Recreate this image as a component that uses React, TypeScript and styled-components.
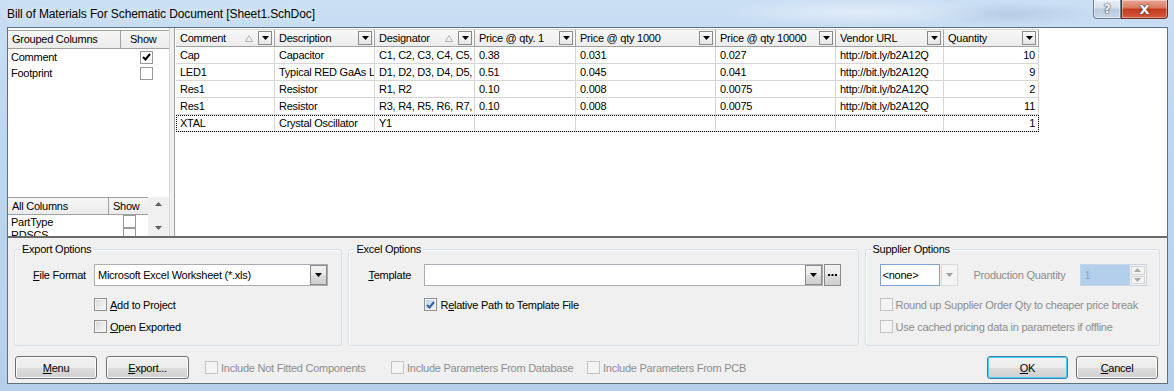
import styled, { createGlobalStyle } from 'styled-components'

const GlobalStyle = createGlobalStyle`
  html, body { margin: 0; padding: 0; }
  body {
    font-family: "Liberation Sans", Arial, sans-serif;
    font-size: 11px;
    letter-spacing: -0.25px;
    color: #000;
  }
`

interface Column {
  title: string
  width: number
  sort?: boolean
  align?: 'left' | 'right'
}

const columns: Column[] = [
  { title: 'Comment', width: 99, sort: true },
  { title: 'Description', width: 100 },
  { title: 'Designator', width: 100, sort: true },
  { title: 'Price @ qty. 1', width: 101 },
  { title: 'Price @ qty 1000', width: 140 },
  { title: 'Price @ qty 10000', width: 120 },
  { title: 'Vendor URL', width: 108 },
  { title: 'Quantity', width: 95, align: 'right' },
]

const rows: string[][] = [
  ['Cap', 'Capacitor', 'C1, C2, C3, C4, C5, C6', '0.38', '0.031', '0.027', 'http://bit.ly/b2A12Q', '10'],
  ['LED1', 'Typical RED GaAs LED', 'D1, D2, D3, D4, D5, D6', '0.51', '0.045', '0.041', 'http://bit.ly/b2A12Q', '9'],
  ['Res1', 'Resistor', 'R1, R2', '0.10', '0.008', '0.0075', 'http://bit.ly/b2A12Q', '2'],
  ['Res1', 'Resistor', 'R3, R4, R5, R6, R7, R8', '0.10', '0.008', '0.0075', 'http://bit.ly/b2A12Q', '11'],
  ['XTAL', 'Crystal Oscillator', 'Y1', '', '', '', '', '1'],
]

const gridTemplate = columns.map((c) => `${c.width}px`).join(' ')

const Window = styled.div`
  width: 1174px;
  height: 391px;
  box-sizing: border-box;
  display: flex;
  flex-direction: column;
  padding: 0 6px 7px 7px;
  overflow: hidden;
  background:
    radial-gradient(ellipse 140px 14px at 860px 12px, rgba(255, 255, 255, 0.45), transparent),
    radial-gradient(ellipse 90px 12px at 1010px 14px, rgba(150, 175, 205, 0.35), transparent),
    linear-gradient(180deg, #cadff4 0%, #bfd7f0 30%, #b6d0ec 100%);
`

const TitleBar = styled.div`
  height: 27px;
  display: flex;
  align-items: flex-start;
  justify-content: space-between;
`

const Title = styled.div`
  font-size: 12px;
  letter-spacing: -0.1px;
  padding-top: 7px;
  color: #000;
  text-shadow: 0 0 6px rgba(255, 255, 255, 0.9);
`

const CaptionButtons = styled.div`
  display: flex;
`

const CaptionButton = styled.div<{ $close?: boolean }>`
  width: ${(p) => (p.$close ? 47 : 28)}px;
  height: 19px;
  box-sizing: border-box;
  display: flex;
  align-items: center;
  justify-content: center;
  border: 1px solid ${(p) => (p.$close ? '#6b2a1e' : '#6f7e91')};
  border-top: none;
  border-radius: ${(p) => (p.$close ? '0 0 4px 0' : '0 0 0 4px')};
  font-family: "DejaVu Sans", sans-serif;
  font-weight: bold;
  font-size: ${(p) => (p.$close ? 13 : 12)}px;
  color: #fff;
  text-shadow: 0 0 2px #333, 0 0 1px #333;
  background: ${(p) =>
    p.$close
      ? 'linear-gradient(180deg, #e8a695 0%, #d9775f 45%, #c4391d 50%, #d25a3e 100%)'
      : 'linear-gradient(180deg, #e9f0f8 0%, #d4e0ee 45%, #b8c9dd 50%, #c9d8e9 100%)'};
  box-shadow: inset 0 0 0 1px rgba(255, 255, 255, 0.4);
`

const Client = styled.div`
  flex: 1;
  display: flex;
  flex-direction: column;
  border: 1px solid #5f6f82;
  background: #f0f0f0;
`

const TopPane = styled.div`
  height: 208px;
  display: flex;
  background: #fff;
  border-bottom: 2px solid #6a6a6a;
`

const LeftPane = styled.div`
  width: 161px;
  display: flex;
  flex-direction: column;
  padding-top: 2px;
  box-sizing: border-box;
`

const Splitter = styled.div`
  width: 4px;
  background: #f0f0f0;
  border-left: 1px solid #d8d8d8;
  border-right: 1px solid #a0a0a0;
`

const ListBlock = styled.div<{ $fill?: boolean }>`
  display: flex;
  flex-direction: column;
  flex: ${(p) => (p.$fill ? 1 : 'none')};
  overflow: hidden;
`

const ListHeader = styled.div<{ $cols: string }>`
  display: grid;
  grid-template-columns: ${(p) => p.$cols};
  height: 17px;
  border-top: 1px solid #a0a0a0;
  border-bottom: 1px solid #a0a0a0;
  background: linear-gradient(180deg, #f7f7f7, #ebebeb);
`

const HeaderText = styled.div<{ $divider?: boolean; $indent?: number }>`
  padding-left: ${(p) => p.$indent ?? 4}px;
  line-height: 16px;
  white-space: nowrap;
  overflow: hidden;
  border-right: ${(p) => (p.$divider ? '1px solid #a0a0a0' : 'none')};
`

const ListRow = styled.div<{ $cols: string }>`
  display: grid;
  grid-template-columns: ${(p) => p.$cols};
  height: 16px;
  align-items: center;
`

const ListCell = styled.div<{ $center?: boolean }>`
  padding-left: 3px;
  display: flex;
  justify-content: ${(p) => (p.$center ? 'center' : 'flex-start')};
  white-space: nowrap;
`

const GridCheck = styled.span`
  width: 13px;
  height: 13px;
  box-sizing: border-box;
  border: 1px solid #9a9a9a;
  background: #fff;
  display: flex;
  align-items: center;
  justify-content: center;
`

const AllColumnsBlock = styled.div`
  height: 39px;
  display: flex;
  overflow: hidden;
`

const ScrollBar = styled.div`
  width: 21px;
  background: #f0f0f0;
  display: flex;
  flex-direction: column;
  justify-content: space-between;
  align-items: center;
  padding: 5px 0 6px;
  box-sizing: border-box;
`

const BomGrid = styled.div`
  flex: 1;
  padding-left: 1px;
  overflow: hidden;
`

const GridRow = styled.div<{ $focused?: boolean; $header?: boolean }>`
  display: grid;
  grid-template-columns: ${gridTemplate};
  width: max-content;
  height: ${(p) => (p.$header ? 18 : 17)}px;
  box-sizing: border-box;
  outline: ${(p) => (p.$focused ? '1px dotted #000' : 'none')};
  outline-offset: -1px;
  ${(p) =>
    p.$header &&
    `
    margin-top: 1px;
    border-top: 1px solid #d8d8d8;
    border-bottom: 1px solid #a0a0a0;
    background: linear-gradient(180deg, #f8f8f8, #ececec);
  `}
`

const HeadCell = styled.div`
  display: flex;
  align-items: center;
  padding-left: 4px;
  padding-right: 2px;
  border-right: 1px solid #a0a0a0;
  box-shadow: inset -1px 0 0 #fff;
  white-space: nowrap;
  overflow: hidden;
`

const HeadTitle = styled.span`
  flex: 1;
`

const SortMark = styled.svg`
  margin-right: 5px;
`

const DropBox = styled.span`
  width: 14px;
  height: 14px;
  box-sizing: border-box;
  border: 1px solid #8a8a8a;
  background: linear-gradient(180deg, #fafafa, #e6e6e6);
  display: flex;
  align-items: center;
  justify-content: center;
  flex: none;
`

const BodyCell = styled.div<{ $right?: boolean }>`
  padding: 0 ${(p) => (p.$right ? 3 : 4)}px 0 4px;
  line-height: 16px;
  border-right: 1px solid #d6d6d6;
  border-bottom: 1px solid #d6d6d6;
  text-align: ${(p) => (p.$right ? 'right' : 'left')};
  white-space: nowrap;
  overflow: hidden;
  text-overflow: clip;
`

const OptionsRow = styled.div`
  display: flex;
  gap: 6px;
  padding: 5px 7px 0 6px;
`

const GroupBox = styled.fieldset<{ $width: number }>`
  width: ${(p) => p.$width}px;
  height: 103px;
  box-sizing: border-box;
  margin: 0;
  padding: 0;
  min-width: 0;
  border: 1px solid #d5dfe5;
  border-radius: 3px;
  box-shadow: inset 1px 1px 0 #fff;

  legend {
    margin-left: 6px;
    padding: 0 2px 0 1px;
    line-height: 13px;
  }
`

const GroupBody = styled.div<{ $pl: number }>`
  display: flex;
  flex-direction: column;
  padding: 8px 0 0 ${(p) => p.$pl}px;
`

const FieldRow = styled.div`
  display: flex;
  align-items: center;
  height: 22px;
`

const FieldLabel = styled.span<{ $width: number; $disabled?: boolean }>`
  width: ${(p) => p.$width}px;
  flex: none;
  color: ${(p) => (p.$disabled ? '#8d8d8d' : '#000')};
  white-space: nowrap;
`

const Combo = styled.div<{ $width: number }>`
  width: ${(p) => p.$width}px;
  height: 22px;
  box-sizing: border-box;
  border: 1px solid #abadb3;
  background: #fff;
  display: flex;
  align-items: stretch;
`

const ComboText = styled.span`
  flex: 1;
  padding-left: 3px;
  line-height: 20px;
  white-space: nowrap;
  overflow: hidden;
`

const ComboButton = styled.span<{ $disabled?: boolean }>`
  width: 17px;
  box-sizing: border-box;
  border: 1px solid ${(p) => (p.$disabled ? '#d9d9d9' : '#8a8a8a')};
  background: ${(p) =>
    p.$disabled ? '#f4f4f4' : 'linear-gradient(180deg, #f2f2f2 0%, #ebebeb 50%, #dddddd 51%, #cfcfcf 100%)'};
  display: flex;
  align-items: center;
  justify-content: center;
`

const EllipsisButton = styled(ComboButton)`
  height: 22px;
  margin-left: 1px;
`

const SupplierCombo = styled.div`
  width: 78px;
  height: 22px;
  display: flex;
  margin-right: 16px;
`

const SupplierEdit = styled.span`
  flex: 1;
  box-sizing: border-box;
  border: 1px solid #7da2ce;
  background: #fff;
  padding-left: 2px;
  line-height: 20px;
  margin-right: 1px;
`

const SpinField = styled.div`
  width: 67px;
  height: 22px;
  box-sizing: border-box;
  border: 1px solid #c6d4e3;
  background: #b3cfeb;
  display: flex;
`

const SpinText = styled.span`
  flex: 1;
  padding-left: 4px;
  line-height: 20px;
  color: #8da4bd;
`

const SpinButtons = styled.span`
  width: 16px;
  display: flex;
  flex-direction: column;
  gap: 1px;
  padding: 1px;
  box-sizing: border-box;
  background: #f4f4f4;
`

const SpinHalf = styled.span`
  flex: 1;
  border: 1px solid #d5d5d5;
  display: flex;
  align-items: center;
  justify-content: center;
`

const CheckRow = styled.label<{ $disabled?: boolean; $width?: number; $indent?: number }>`
  display: flex;
  align-items: center;
  gap: 3px;
  height: 13px;
  margin-left: ${(p) => p.$indent ?? 0}px;
  width: ${(p) => (p.$width ? `${p.$width}px` : 'auto')};
  flex: none;
  color: ${(p) => (p.$disabled ? '#8d8d8d' : '#000')};
  white-space: nowrap;
`

const CheckBox = styled.span<{ $disabled?: boolean; $checked?: boolean }>`
  width: 13px;
  height: 13px;
  box-sizing: border-box;
  flex: none;
  border: 1px solid ${(p) => (p.$disabled ? '#c4c4c4' : '#8e8f8f')};
  background: ${(p) =>
    p.$disabled
      ? '#f4f4f4'
      : p.$checked
        ? 'linear-gradient(135deg, #b9cfe6, #eef4fb)'
        : 'linear-gradient(135deg, #d6d6d6, #fbfbfb)'};
  box-shadow: inset 0 0 0 1px #f4f4f4;
  display: flex;
  align-items: center;
  justify-content: center;
`

const ChecksColumn = styled.div<{ $gap: number; $top: number }>`
  display: flex;
  flex-direction: column;
  gap: ${(p) => p.$gap}px;
  margin-top: ${(p) => p.$top}px;
`

const BottomBar = styled.div`
  display: flex;
  align-items: center;
  padding: 10px 9px 0 7px;
`

const Button = styled.button<{ $width: number; $default?: boolean; $gap?: number }>`
  width: ${(p) => p.$width}px;
  height: 23px;
  margin-right: ${(p) => p.$gap ?? 9}px;
  padding: 0;
  font: inherit;
  letter-spacing: inherit;
  color: #000;
  border: 1px solid ${(p) => (p.$default ? '#3c7fb1' : '#707070')};
  border-radius: 3px;
  background: linear-gradient(180deg, #f2f2f2 0%, #ebebeb 50%, #dddddd 51%, #cfcfcf 100%);
  box-shadow: inset 0 0 0 1px ${(p) => (p.$default ? '#48d0f7' : '#fcfcfc')};
`

const Spacer = styled.div`
  flex: 1;
`

const DownArrow = ({ color = '#000' }: { color?: string }) => (
  <svg width="7" height="4" viewBox="0 0 7 4">
    <polygon points="0,0 7,0 3.5,4" fill={color} />
  </svg>
)

const UpArrow = ({ color = '#000' }: { color?: string }) => (
  <svg width="7" height="4" viewBox="0 0 7 4">
    <polygon points="0,4 7,4 3.5,0" fill={color} />
  </svg>
)

const Tick = ({ color = '#000' }: { color?: string }) => (
  <svg width="9" height="8" viewBox="0 0 9 8">
    <path d="M1 4 L3.5 6.5 L8 1" stroke={color} strokeWidth="2" fill="none" />
  </svg>
)

const SortArrow = () => (
  <SortMark width="8" height="7" viewBox="0 0 8 7">
    <polygon points="0.5,6.5 7.5,6.5 4,0.5" fill="none" stroke="#b4b4b4" />
  </SortMark>
)

const Ellipsis = () => (
  <svg width="9" height="2" viewBox="0 0 9 2">
    <rect x="0" y="0" width="2" height="2" fill="#000" />
    <rect x="3.5" y="0" width="2" height="2" fill="#000" />
    <rect x="7" y="0" width="2" height="2" fill="#000" />
  </svg>
)

function Check({
  label,
  checked,
  disabled,
  width,
  indent,
}: {
  label: React.ReactNode
  checked?: boolean
  disabled?: boolean
  width?: number
  indent?: number
}) {
  return (
    <CheckRow $disabled={disabled} $width={width} $indent={indent}>
      <CheckBox $disabled={disabled} $checked={checked}>
        {checked && <Tick color="#3a5f9c" />}
      </CheckBox>
      <span>{label}</span>
    </CheckRow>
  )
}

export default function App() {
  return (
    <Window>
      <GlobalStyle />
      <TitleBar>
        <Title>Bill of Materials For Schematic Document [Sheet1.SchDoc]</Title>
        <CaptionButtons>
          <CaptionButton>?</CaptionButton>
          <CaptionButton $close>X</CaptionButton>
        </CaptionButtons>
      </TitleBar>
      <Client>
        <TopPane>
          <LeftPane>
            <ListBlock $fill>
              <ListHeader $cols="113px 48px">
                <HeaderText $divider>Grouped Columns</HeaderText>
                <HeaderText $indent={9}>Show</HeaderText>
              </ListHeader>
              <ListRow $cols="113px 48px">
                <ListCell>Comment</ListCell>
                <ListCell $center>
                  <GridCheck>
                    <Tick />
                  </GridCheck>
                </ListCell>
              </ListRow>
              <ListRow $cols="113px 48px">
                <ListCell>Footprint</ListCell>
                <ListCell $center>
                  <GridCheck />
                </ListCell>
              </ListRow>
            </ListBlock>
            <AllColumnsBlock>
              <ListBlock $fill>
                <ListHeader $cols="101px 38px">
                  <HeaderText $divider>All Columns</HeaderText>
                  <HeaderText>Show</HeaderText>
                </ListHeader>
                <ListRow $cols="101px 38px">
                  <ListCell>PartType</ListCell>
                  <ListCell $center>
                    <GridCheck />
                  </ListCell>
                </ListRow>
                <ListRow $cols="101px 38px">
                  <ListCell>RDSCS</ListCell>
                  <ListCell $center>
                    <GridCheck />
                  </ListCell>
                </ListRow>
              </ListBlock>
              <ScrollBar>
                <UpArrow color="#606060" />
                <DownArrow color="#606060" />
              </ScrollBar>
            </AllColumnsBlock>
          </LeftPane>
          <Splitter />
          <BomGrid>
            <GridRow $header>
              {columns.map((c) => (
                <HeadCell key={c.title}>
                  <HeadTitle>{c.title}</HeadTitle>
                  {c.sort && <SortArrow />}
                  <DropBox>
                    <DownArrow />
                  </DropBox>
                </HeadCell>
              ))}
            </GridRow>
            {rows.map((r, i) => (
              <GridRow key={i} $focused={i === rows.length - 1}>
                {r.map((v, j) => (
                  <BodyCell key={j} $right={columns[j].align === 'right'}>
                    {v}
                  </BodyCell>
                ))}
              </GridRow>
            ))}
          </BomGrid>
        </TopPane>

        <OptionsRow>
          <GroupBox $width={329}>
            <legend>Export Options</legend>
            <GroupBody $pl={18}>
              <FieldRow>
                <FieldLabel $width={61}>
                  <u>F</u>ile Format
                </FieldLabel>
                <Combo $width={234}>
                  <ComboText>Microsoft Excel Worksheet (*.xls)</ComboText>
                  <ComboButton>
                    <DownArrow />
                  </ComboButton>
                </Combo>
              </FieldRow>
              <ChecksColumn $gap={9} $top={12}>
                <Check
                  indent={61}
                  label={
                    <>
                      <u>A</u>dd to Project
                    </>
                  }
                />
                <Check
                  indent={61}
                  label={
                    <>
                      <u>O</u>pen Exported
                    </>
                  }
                />
              </ChecksColumn>
            </GroupBody>
          </GroupBox>

          <GroupBox $width={511}>
            <legend>Excel Options</legend>
            <GroupBody $pl={19}>
              <FieldRow>
                <FieldLabel $width={56}>
                  <u>T</u>emplate
                </FieldLabel>
                <Combo $width={399}>
                  <ComboText />
                  <ComboButton>
                    <DownArrow />
                  </ComboButton>
                </Combo>
                <EllipsisButton>
                  <Ellipsis />
                </EllipsisButton>
              </FieldRow>
              <ChecksColumn $gap={9} $top={12}>
                <Check
                  indent={56}
                  checked
                  label={
                    <>
                      R<u>e</u>lative Path to Template File
                    </>
                  }
                />
              </ChecksColumn>
            </GroupBody>
          </GroupBox>

          <GroupBox $width={296}>
            <legend>Supplier Options</legend>
            <GroupBody $pl={14}>
              <FieldRow>
                <SupplierCombo>
                  <SupplierEdit>&lt;none&gt;</SupplierEdit>
                  <ComboButton $disabled>
                    <DownArrow color="#a0a0a0" />
                  </ComboButton>
                </SupplierCombo>
                <FieldLabel $width={106} $disabled>
                  Production Quantity
                </FieldLabel>
                <SpinField>
                  <SpinText>1</SpinText>
                  <SpinButtons>
                    <SpinHalf>
                      <UpArrow color="#a8a8a8" />
                    </SpinHalf>
                    <SpinHalf>
                      <DownArrow color="#a8a8a8" />
                    </SpinHalf>
                  </SpinButtons>
                </SpinField>
              </FieldRow>
              <ChecksColumn $gap={9} $top={12}>
                <Check disabled label="Round up Supplier Order Qty to cheaper price break" />
                <Check disabled label="Use cached pricing data in parameters if offline" />
              </ChecksColumn>
            </GroupBody>
          </GroupBox>
        </OptionsRow>

        <BottomBar>
          <Button $width={82}>
            <u>M</u>enu
          </Button>
          <Button $width={83} $gap={16}>
            <u>E</u>xport...
          </Button>
          <Check disabled width={186} label="Include Not Fitted Components" />
          <Check disabled width={196} label="Include Parameters From Database" />
          <Check disabled label="Include Parameters From PCB" />
          <Spacer />
          <Button $width={81} $default $gap={8}>
            <u>O</u>K
          </Button>
          <Button $width={82} $gap={0}>
            <u>C</u>ancel
          </Button>
        </BottomBar>
      </Client>
    </Window>
  )
}
